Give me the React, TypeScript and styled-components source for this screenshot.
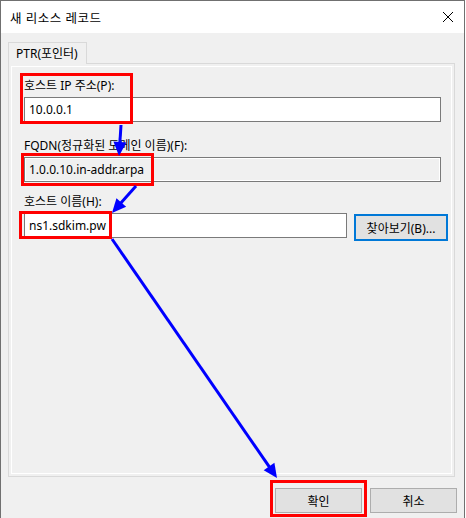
import styled, { createGlobalStyle } from "styled-components";

const GlobalStyle = createGlobalStyle`
  html, body {
    margin: 0;
    padding: 0;
    background: #ffffff;
  }
  body {
    font-family: "Noto Sans", "Noto Sans CJK KR", sans-serif;
    font-size: 12px;
    color: #000;
  }
`;

// 창 틀
const Page = styled.div`
  position: relative;
  width: 466px;
  height: 518px;
  overflow: hidden;
`;

const Window = styled.div`
  width: 465px;
  height: 518px;
  box-sizing: border-box;
  border: 1px solid #707070;
  border-bottom: none;
  background: #f0f0f0;
  display: flex;
  flex-direction: column;
`;

const TitleBar = styled.div`
  height: 32px;
  background: #ffffff;
  display: flex;
  align-items: center;
  justify-content: space-between;
  padding: 0 10px 0 9px;
`;

const Title = styled.span`
  font-size: 12.5px;
  letter-spacing: 0.5px;
`;

const Body = styled.div`
  flex: 1;
  padding: 9px 9px 0 7px;
  display: flex;
  flex-direction: column;
`;

// 탭
const TabStrip = styled.div`
  display: flex;
  height: 21px;
  position: relative;
  z-index: 1;
`;

const Tab = styled.div`
  width: 79px;
  box-sizing: border-box;
  height: 22px;
  border: 1px solid #d9d9d9;
  border-bottom: none;
  background: #f0f0f0;
  display: flex;
  align-items: center;
  padding-left: 7px;
  padding-bottom: 1px;
`;

const Panel = styled.div`
  height: 414px;
  box-sizing: border-box;
  border: 1px solid #d9d9d9;
  box-shadow: inset 0 0 0 2px #f0f0f0, inset 0 0 0 3px #ffffff;
  padding: 14px 13px 0 15px;
`;

// 입력 필드
const Field = styled.div<{ top: number }>`
  margin-top: ${(p) => p.top}px;
  display: flex;
  flex-direction: column;
`;

const Label = styled.div`
  height: 16px;
  line-height: 16px;
  margin-bottom: 3px;
`;

const TextBox = styled.div<{ disabled?: boolean; width?: number }>`
  box-sizing: border-box;
  flex-shrink: 0;
  height: 25px;
  width: ${(p) => (p.width ? `${p.width}px` : "417px")};
  border: 1px solid #7a7a7a;
  background: ${(p) => (p.disabled ? "#f0f0f0" : "#ffffff")};
  box-shadow: ${(p) => (p.disabled ? "inset 0 0 0 1px #ffffff" : "none")};
  display: flex;
  align-items: center;
  padding-left: 4px;
`;

const Row = styled.div`
  display: flex;
  align-items: flex-start;
  gap: 7px;
`;

const Button = styled.button<{ focused?: boolean }>`
  box-sizing: border-box;
  flex-shrink: 0;
  font-family: inherit;
  font-size: 12px;
  color: #000;
  background: #e1e1e1;
  border: ${(p) => (p.focused ? "2px solid #0078d7" : "1px solid #adadad")};
  padding: 0;
  margin: 0;
  display: flex;
  align-items: center;
  justify-content: center;
`;

const BrowseButton = styled(Button)`
  width: 94px;
  height: 27px;
  margin-top: 1px;
`;

const Footer = styled.div`
  display: flex;
  justify-content: flex-end;
  gap: 8px;
  margin-top: 11px;
  margin-right: -2px;
`;

const FooterButton = styled(Button)`
  width: 87px;
  height: 25px;
`;

// 주석(빨간 박스, 파란 화살표)
const Overlay = styled.svg`
  position: absolute;
  left: 0;
  top: 0;
  pointer-events: none;
`;

type ArrowProps = { x1: number; y1: number; x2: number; y2: number };

const Arrow = ({ x1, y1, x2, y2 }: ArrowProps) => {
  const dx = x2 - x1;
  const dy = y2 - y1;
  const len = Math.hypot(dx, dy);
  const ux = dx / len;
  const uy = dy / len;
  const head = 14;
  const half = 6.5;
  const bx = x2 - ux * head;
  const by = y2 - uy * head;
  const pts = `${x2},${y2} ${bx - uy * half},${by + ux * half} ${bx + uy * half},${by - ux * half}`;
  return (
    <g>
      <line x1={x1} y1={y1} x2={bx + ux * 2} y2={by + uy * 2} stroke="#0000ff" strokeWidth={3} />
      <polygon points={pts} fill="#0000ff" />
    </g>
  );
};

const boxes = [
  { x: 21.5, y: 74.5, w: 110, h: 48 },
  { x: 22.5, y: 154.5, w: 130, h: 30 },
  { x: 20.5, y: 212.5, w: 90, h: 25 },
  { x: 271.5, y: 481.5, w: 94, h: 34 },
];

const arrows: ArrowProps[] = [
  { x1: 121, y1: 125, x2: 119, y2: 156 },
  { x1: 136, y1: 186, x2: 112, y2: 213 },
  { x1: 112, y1: 239, x2: 277, y2: 478 },
];

export default function App() {
  return (
    <>
      <GlobalStyle />
      <Page>
        <Window>
          <TitleBar>
            <Title>새 리소스 레코드</Title>
            <svg width="12" height="12" viewBox="0 0 12 12">
              <path d="M1 1 L11 11 M11 1 L1 11" stroke="#000" strokeWidth="1" />
            </svg>
          </TitleBar>
          <Body>
            <TabStrip>
              <Tab>PTR(포인터)</Tab>
            </TabStrip>
            <Panel>
              <Field top={0}>
                <Label>호스트 IP 주소(P):</Label>
                <TextBox>10.0.0.1</TextBox>
              </Field>
              <Field top={16}>
                <Label>FQDN(정규화된 도메인 이름)(F):</Label>
                <TextBox disabled>1.0.0.10.in-addr.arpa</TextBox>
              </Field>
              <Field top={12}>
                <Label>호스트 이름(H):</Label>
                <Row>
                  <TextBox width={323}>ns1.sdkim.pw</TextBox>
                  <BrowseButton focused>찾아보기(B)...</BrowseButton>
                </Row>
              </Field>
            </Panel>
            <Footer>
              <FooterButton>확인</FooterButton>
              <FooterButton>취소</FooterButton>
            </Footer>
          </Body>
        </Window>
        <Overlay width={466} height={518}>
          {boxes.map((b, i) => (
            <rect key={i} x={b.x} y={b.y} width={b.w} height={b.h} fill="none" stroke="#ff0000" strokeWidth={3} />
          ))}
          {arrows.map((a, i) => (
            <Arrow key={i} {...a} />
          ))}
        </Overlay>
      </Page>
    </>
  );
}
